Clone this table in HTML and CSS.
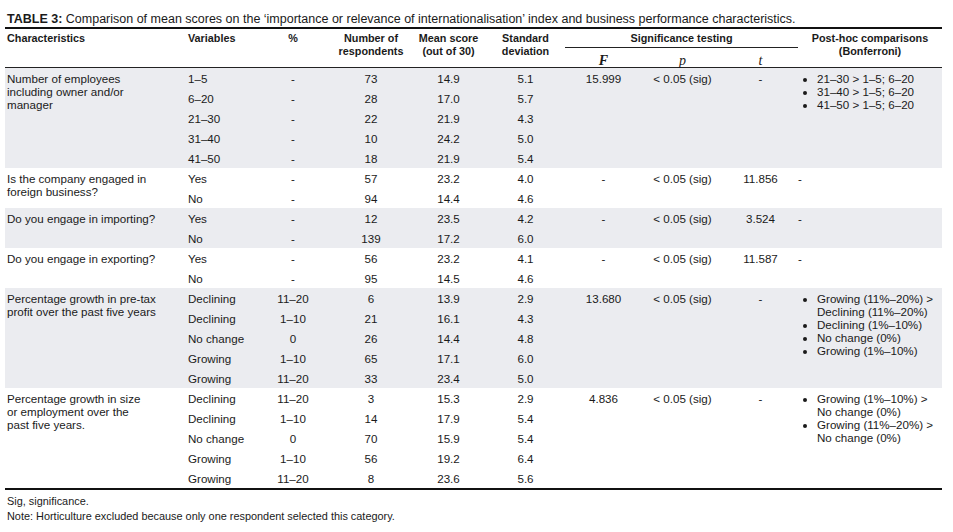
FILE: index.html
```html
<!DOCTYPE html>
<html>
<head>
<meta charset="utf-8">
<link rel="stylesheet" href="styles.css">
</head>
<body>
<div class="page">
  <div class="title"><b>TABLE 3:</b> Comparison of mean scores on the ‘importance or relevance of internationalisation’ index and business performance characteristics.</div>
  <table class="tbl">
    <colgroup>
      <col class="w1"><col class="w2"><col class="w3"><col class="w4"><col class="w5"><col class="w6"><col class="w7"><col class="w8"><col class="w9"><col class="w10">
    </colgroup>
    <thead>
      <tr class="r1">
        <th rowspan="2" class="h-left h1">Characteristics</th>
        <th rowspan="2" class="h-left h2">Variables</th>
        <th rowspan="2">%</th>
        <th rowspan="2">Number of<br>respondents</th>
        <th rowspan="2">Mean score<br>(out of 30)</th>
        <th rowspan="2">Standard<br>deviation</th>
        <th colspan="3" class="sig">Significance testing</th>
        <th rowspan="2">Post-hoc comparisons<br>(Bonferroni)</th>
      </tr>
      <tr class="r2">
        <th class="stat stat-f">F</th>
        <th class="stat">p</th>
        <th class="stat">t</th>
      </tr>
    </thead>
    <tbody class="g">
      <tr>
        <td rowspan="5" class="c1">Number of employees<br>including owner and/or<br>manager</td>
        <td class="c2">1–5</td><td>-</td><td>73</td><td>14.9</td><td>5.1</td><td>15.999</td><td>&lt; 0.05 (sig)</td><td>-</td>
        <td rowspan="5" class="post">
          <ul>
            <li>21–30 &gt; 1–5; 6–20</li>
            <li>31–40 &gt; 1–5; 6–20</li>
            <li>41–50 &gt; 1–5; 6–20</li>
          </ul>
        </td>
      </tr>
      <tr><td class="c2">6–20</td><td>-</td><td>28</td><td>17.0</td><td>5.7</td><td></td><td></td><td></td></tr>
      <tr><td class="c2">21–30</td><td>-</td><td>22</td><td>21.9</td><td>4.3</td><td></td><td></td><td></td></tr>
      <tr><td class="c2">31–40</td><td>-</td><td>10</td><td>24.2</td><td>5.0</td><td></td><td></td><td></td></tr>
      <tr><td class="c2">41–50</td><td>-</td><td>18</td><td>21.9</td><td>5.4</td><td></td><td></td><td></td></tr>
    </tbody>
    <tbody>
      <tr>
        <td rowspan="2" class="c1">Is the company engaged in<br>foreign business?</td>
        <td class="c2">Yes</td><td>-</td><td>57</td><td>23.2</td><td>4.0</td><td>-</td><td>&lt; 0.05 (sig)</td><td>11.856</td>
        <td rowspan="2" class="post">-</td>
      </tr>
      <tr><td class="c2">No</td><td>-</td><td>94</td><td>14.4</td><td>4.6</td><td></td><td></td><td></td></tr>
    </tbody>
    <tbody class="g">
      <tr>
        <td rowspan="2" class="c1">Do you engage in importing?</td>
        <td class="c2">Yes</td><td>-</td><td>12</td><td>23.5</td><td>4.2</td><td>-</td><td>&lt; 0.05 (sig)</td><td>3.524</td>
        <td rowspan="2" class="post">-</td>
      </tr>
      <tr><td class="c2">No</td><td>-</td><td>139</td><td>17.2</td><td>6.0</td><td></td><td></td><td></td></tr>
    </tbody>
    <tbody>
      <tr>
        <td rowspan="2" class="c1">Do you engage in exporting?</td>
        <td class="c2">Yes</td><td>-</td><td>56</td><td>23.2</td><td>4.1</td><td>-</td><td>&lt; 0.05 (sig)</td><td>11.587</td>
        <td rowspan="2" class="post">-</td>
      </tr>
      <tr><td class="c2">No</td><td>-</td><td>95</td><td>14.5</td><td>4.6</td><td></td><td></td><td></td></tr>
    </tbody>
    <tbody class="g">
      <tr>
        <td rowspan="5" class="c1">Percentage growth in pre-tax<br>profit over the past five years</td>
        <td class="c2">Declining</td><td>11–20</td><td>6</td><td>13.9</td><td>2.9</td><td>13.680</td><td>&lt; 0.05 (sig)</td><td>-</td>
        <td rowspan="5" class="post">
          <ul>
            <li>Growing (11%–20%) &gt;<br>Declining (11%–20%)</li>
            <li>Declining (1%–10%)</li>
            <li>No change (0%)</li>
            <li>Growing (1%–10%)</li>
          </ul>
        </td>
      </tr>
      <tr><td class="c2">Declining</td><td>1–10</td><td>21</td><td>16.1</td><td>4.3</td><td></td><td></td><td></td></tr>
      <tr><td class="c2">No change</td><td>0</td><td>26</td><td>14.4</td><td>4.8</td><td></td><td></td><td></td></tr>
      <tr><td class="c2">Growing</td><td>1–10</td><td>65</td><td>17.1</td><td>6.0</td><td></td><td></td><td></td></tr>
      <tr><td class="c2">Growing</td><td>11–20</td><td>33</td><td>23.4</td><td>5.0</td><td></td><td></td><td></td></tr>
    </tbody>
    <tbody>
      <tr>
        <td rowspan="5" class="c1">Percentage growth in size<br>or employment over the<br>past five years.</td>
        <td class="c2">Declining</td><td>11–20</td><td>3</td><td>15.3</td><td>2.9</td><td>4.836</td><td>&lt; 0.05 (sig)</td><td>-</td>
        <td rowspan="5" class="post">
          <ul>
            <li>Growing (1%–10%) &gt;<br>No change (0%)</li>
            <li>Growing (11%–20%) &gt;<br>No change (0%)</li>
          </ul>
        </td>
      </tr>
      <tr><td class="c2">Declining</td><td>1–10</td><td>14</td><td>17.9</td><td>5.4</td><td></td><td></td><td></td></tr>
      <tr><td class="c2">No change</td><td>0</td><td>70</td><td>15.9</td><td>5.4</td><td></td><td></td><td></td></tr>
      <tr><td class="c2">Growing</td><td>1–10</td><td>56</td><td>19.2</td><td>6.4</td><td></td><td></td><td></td></tr>
      <tr><td class="c2">Growing</td><td>11–20</td><td>8</td><td>23.6</td><td>5.6</td><td></td><td></td><td></td></tr>
    </tbody>
  </table>
  <div class="notes">
    <p>Sig, significance.</p>
    <p>Note: Horticulture excluded because only one respondent selected this category.</p>
  </div>
</div>
</body>
</html>
```

FILE: styles.css
```css
* { box-sizing: border-box; }

body {
  margin: 0;
  background: #ffffff;
  color: #1a1a1a;
  font-family: "Liberation Sans", Arial, sans-serif;
  font-size: 11.6px;
}

.page {
  padding-left: 5px;
}

.title {
  height: 27px;
  padding: 12px 0 0 2px;
  line-height: 14px;
  font-size: 12.5px;
  white-space: nowrap;
}

.title b { font-weight: 700; }

.tbl {
  width: 937px;
  table-layout: fixed;
  border-collapse: separate;
  border-spacing: 0;
  border-top: 2px solid #111;
  border-bottom: 2px solid #111;
}

.w1 { width: 180px; }
.w2 { width: 70px; }
.w3 { width: 76px; }
.w4 { width: 80px; }
.w5 { width: 75px; }
.w6 { width: 79px; }
.w7 { width: 77px; }
.w8 { width: 81px; }
.w9 { width: 75px; }
.w10 { width: 144px; }

.tbl th,
.tbl td {
  padding: 0;
  line-height: 13px;
  white-space: nowrap;
}

.tbl thead th {
  font-weight: 700;
  font-size: 10.8px;
  text-align: center;
  vertical-align: top;
  padding-top: 3px;
}

.tbl thead th[rowspan] {
  border-bottom: 1px solid #222;
}

.tbl thead .r1 { height: 19px; }
.tbl thead .r2 { height: 20px; }

.tbl thead th.h-left { text-align: left; }
.tbl thead th.h1 { padding-left: 2px; }
.tbl thead th.h2 { padding-left: 3px; }

.tbl thead th.sig {
  border-bottom: 1px solid #222;
}

.tbl thead th.stat {
  border-bottom: 1px solid #222;
  padding-top: 6px;
  font-family: "Liberation Serif", serif;
  font-style: italic;
  font-weight: 400;
  font-size: 14px;
}

.tbl thead th.stat-f { font-weight: 700; }

.tbl tbody tr { height: 20px; }

.tbl td {
  text-align: center;
  vertical-align: middle;
}

.tbl tbody.g td { background: #ebecf0; }

.tbl td.c1 {
  text-align: left;
  vertical-align: top;
  padding: 3.5px 0 0 2px;
}

.tbl td.c2 {
  text-align: left;
  padding-left: 3px;
}

.tbl td.post {
  text-align: left;
  vertical-align: top;
  padding-top: 3.5px;
}

.post ul {
  margin: 0;
  padding-left: 19px;
  list-style: disc;
}

.notes {
  padding: 4px 0 0 2px;
  font-size: 10.9px;
}

.notes p {
  margin: 0;
  line-height: 15px;
}
```
